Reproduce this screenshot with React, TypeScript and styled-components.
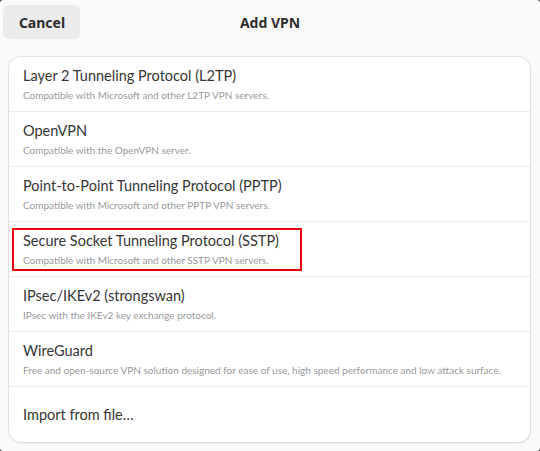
import React from "react";
import styled, { createGlobalStyle } from "styled-components";

const Global = createGlobalStyle`
  html, body { margin: 0; padding: 0; background: #2a2a2a; }
  body { font-family: "Noto Sans", "DejaVu Sans", sans-serif; }
  #root { width: 540px; height: 451px; }
`;

const Window = styled.div`
  width: 540px;
  height: 451px;
  background: #fafafa;
  border-radius: 3px;
  overflow: hidden;
  display: flex;
  flex-direction: column;
  box-sizing: border-box;
`;

const Header = styled.div`
  display: grid;
  grid-template-columns: 1fr auto 1fr;
  align-items: center;
  padding: 5px 3px 0 3px;
  height: 39px;
  box-sizing: border-box;
`;

const HeaderButton = styled.button`
  justify-self: start;
  width: 77px;
  height: 34px;
  border: none;
  border-radius: 6px;
  background: #ebebeb;
  color: #2e2e2e;
  font-family: inherit;
  font-weight: 700;
  font-size: 14px;
  padding: 0 0 0 1px;
`;

const Title = styled.div`
  font-weight: 700;
  font-size: 14px;
  color: #2e2e2e;
`;

const Card = styled.div`
  margin: 18px 10px 0 9px;
  background: #ffffff;
  border-radius: 12px;
  box-shadow: 0 0 0 1px rgba(0, 0, 0, 0.07), 0 1px 3px rgba(0, 0, 0, 0.09);
  display: flex;
  flex-direction: column;
  overflow: hidden;
`;

const Row = styled.div<{ $last?: boolean }>`
  height: 55px;
  box-sizing: border-box;
  padding: 0 14px;
  display: flex;
  flex-direction: column;
  justify-content: center;
  border-bottom: ${(p) => (p.$last ? "none" : "1px solid #ebebeb")};
  position: relative;
`;

const RowTitle = styled.div`
  font-family: "Lato", "Noto Sans", sans-serif;
  font-size: 14.5px;
  color: #363636;
  line-height: 19px;
  white-space: nowrap;
`;

const RowSubtitle = styled.div`
  font-family: "Lato", "Noto Sans", sans-serif;
  font-size: 10px;
  color: #9a9a9a;
  line-height: 14px;
  margin-top: 3px;
  white-space: nowrap;
`;

const Highlight = styled.div`
  position: absolute;
  left: 3px;
  top: 6px;
  width: 290px;
  height: 43px;
  border: 2px solid #e8000b;
  box-sizing: border-box;
  pointer-events: none;
`;

const items = [
  { t: "Layer 2 Tunneling Protocol (L2TP)", s: "Compatible with Microsoft and other L2TP VPN servers." },
  { t: "OpenVPN", s: "Compatible with the OpenVPN server." },
  { t: "Point-to-Point Tunneling Protocol (PPTP)", s: "Compatible with Microsoft and other PPTP VPN servers." },
  { t: "Secure Socket Tunneling Protocol (SSTP)", s: "Compatible with Microsoft and other SSTP VPN servers.", hl: true },
  { t: "IPsec/IKEv2 (strongswan)", s: "IPsec with the IKEv2 key exchange protocol." },
  { t: "WireGuard", s: "Free and open-source VPN solution designed for ease of use, high speed performance and low attack surface." },
];

export default function App() {
  return (
    <>
      <Global />
      <Window>
        <Header>
          <HeaderButton>Cancel</HeaderButton>
          <Title>Add VPN</Title>
          <div />
        </Header>
        <Card>
          {items.map((it) => (
            <Row key={it.t}>
              {it.hl && <Highlight />}
              <RowTitle>{it.t}</RowTitle>
              <RowSubtitle>{it.s}</RowSubtitle>
            </Row>
          ))}
          <Row $last>
            <RowTitle>Import from file…</RowTitle>
          </Row>
        </Card>
      </Window>
    </>
  );
}
